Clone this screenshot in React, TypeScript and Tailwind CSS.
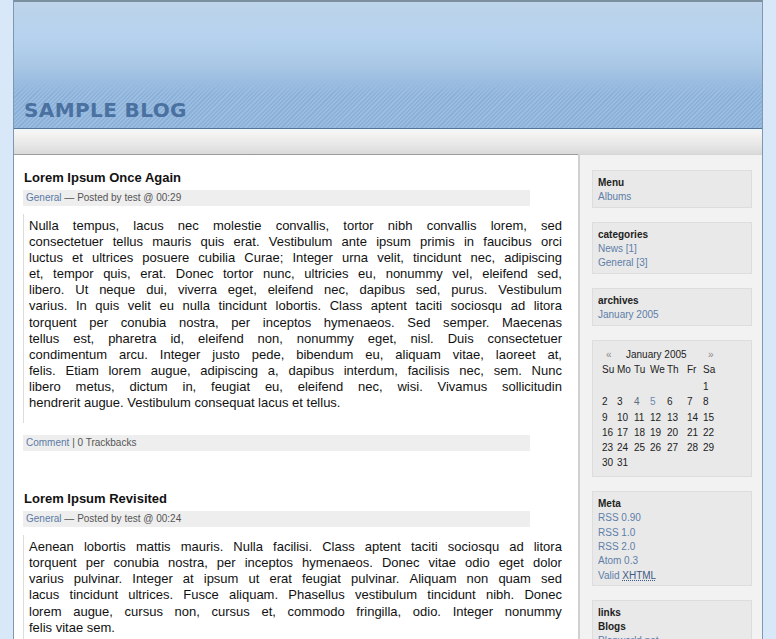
const post1 = [
  'Nulla tempus, lacus nec molestie convallis, tortor nibh convallis lorem, sed',
  'consectetuer tellus mauris quis erat. Vestibulum ante ipsum primis in faucibus orci',
  'luctus et ultrices posuere cubilia Curae; Integer urna velit, tincidunt nec, adipiscing',
  'et, tempor quis, erat. Donec tortor nunc, ultricies eu, nonummy vel, eleifend sed,',
  'libero. Ut neque dui, viverra eget, eleifend nec, dapibus sed, purus. Vestibulum',
  'varius. In quis velit eu nulla tincidunt lobortis. Class aptent taciti sociosqu ad litora',
  'torquent per conubia nostra, per inceptos hymenaeos. Sed semper. Maecenas',
  'tellus est, pharetra id, eleifend non, nonummy eget, nisl. Duis consectetuer',
  'condimentum arcu. Integer justo pede, bibendum eu, aliquam vitae, laoreet at,',
  'felis. Etiam lorem augue, adipiscing a, dapibus interdum, facilisis nec, sem. Nunc',
  'libero metus, dictum in, feugiat eu, eleifend nec, wisi. Vivamus sollicitudin',
  'hendrerit augue. Vestibulum consequat lacus et tellus.',
]

const post2 = [
  'Aenean lobortis mattis mauris. Nulla facilisi. Class aptent taciti sociosqu ad litora',
  'torquent per conubia nostra, per inceptos hymenaeos. Donec vitae odio eget dolor',
  'varius pulvinar. Integer at ipsum ut erat feugiat pulvinar. Aliquam non quam sed',
  'lacus tincidunt ultrices. Fusce aliquam. Phasellus vestibulum tincidunt nibh. Donec',
  'lorem augue, cursus non, cursus et, commodo fringilla, odio. Integer nonummy',
  'felis vitae sem.',
]

const weeks = [
  ['', '', '', '', '', '', '1'],
  ['2', '3', '4', '5', '6', '7', '8'],
  ['9', '10', '11', '12', '13', '14', '15'],
  ['16', '17', '18', '19', '20', '21', '22'],
  ['23', '24', '25', '26', '27', '28', '29'],
  ['30', '31', '', '', '', '', ''],
]

const cols = 'ml-[4px] grid grid-cols-[15px_17px_16px_17px_20px_16px_16px]'

// justified text, one row per printed line so the breaks match
function Lines({ lines }: { lines: string[] }) {
  return (
    <>
      {lines.map((line, i) =>
        i < lines.length - 1 ? (
          <div key={i} className="flex justify-between whitespace-nowrap">
            {line.split(' ').map((w, j) => (
              <span key={j}>{w}</span>
            ))}
          </div>
        ) : (
          <div key={i}>{line}</div>
        )
      )}
    </>
  )
}

function Post({ title, time, lines, footer = true }: { title: string; time: string; lines: string[]; footer?: boolean }) {
  return (
    <div>
      <h2 className="pl-[1px] text-[13px] font-bold leading-[16px] text-[#111]">{title}</h2>
      <div className="mt-[4px] h-[16px] w-[507px] bg-[#eeeeee] pl-[3px] text-[10px] leading-[16px] text-[#555]">
        <span className="text-[#5a7aa6]">General</span> — Posted by test @ {time}
      </div>
      <div className="mt-[8px] w-[539px] border-l border-[#dcdcdc] pt-[4px] pb-[12px] pl-[5px] text-[13px] leading-[16.1px] text-[#111]">
        <Lines lines={lines} />
      </div>
      {footer && (
        <div className="mt-[12px] h-[16px] w-[507px] bg-[#eeeeee] pl-[3px] text-[10px] leading-[16px] text-[#555]">
          <span className="text-[#5a7aa6]">Comment</span> | 0 Trackbacks
        </div>
      )}
    </div>
  )
}

function Box({ children, className = '' }: { children: React.ReactNode; className?: string }) {
  return (
    <div className={`mb-[14px] w-[160px] border border-[#dddddd] bg-[#e9e9e9] px-[5px] text-[10px] ${className}`}>
      {children}
    </div>
  )
}

export default function App() {
  return (
    <div className="h-screen overflow-hidden bg-[#d9e8f8] font-['Liberation_Sans',Arial,sans-serif] text-[#222]">
      <div className="ml-[13px] min-h-full w-[750px] border-x border-[#7e98b4] bg-white">
        <header className="border-t-2 border-b border-t-[#7c8f9f] border-b-[#55749a]">
          <div className="h-[78px] bg-[linear-gradient(to_bottom,#bdd4ea,#b6d2ee_45%,#abc9e6_78%,#9dbee1)]" />
          <div className="flex h-[48px] items-end bg-[linear-gradient(to_bottom,#9bbde1,rgba(155,189,225,0)_30%),repeating-linear-gradient(135deg,#8cb1d9_0px,#8cb1d9_1.5px,#9cbde2_1.5px,#9cbde2_3px)] pb-[7px] pl-[10px]">
            <h1 className="font-['DejaVu_Sans',sans-serif] text-[20px] font-bold leading-[22px] tracking-[0.4px] text-[#4a71a0]">
              SAMPLE BLOG
            </h1>
          </div>
        </header>
        <div className="h-[25px] bg-[linear-gradient(to_bottom,#eef7fc,#f6f4f2_15%,#e8e8e8_60%,#dadada)]" />

        <div className="flex">
          <main className="w-[564px] border-t border-[#9c9c9c] pt-[15px] pl-[9px]">
            <Post title="Lorem Ipsum Once Again" time="00:29" lines={post1} />
            <div className="mt-[40px]">
              <Post title="Lorem Ipsum Revisited" time="00:24" lines={post2} footer={false} />
            </div>
          </main>

          <aside className="flex-1 border-t border-l-2 border-t-[#d6d6d6] border-l-[#d0d0d0] bg-[#f2f2f2] pt-[15px] pl-[12px]">
            <Box className="pt-[5px] pb-[3px] leading-[14px]">
              <div className="font-bold text-[#222]">Menu</div>
              <div className="text-[#5e7ea8]">Albums</div>
            </Box>
            <Box className="pt-[5px] pb-[3px] leading-[14px]">
              <div className="font-bold text-[#222]">categories</div>
              <div className="text-[#5e7ea8]">News [1]</div>
              <div className="text-[#5e7ea8]">General [3]</div>
            </Box>
            <Box className="pt-[5px] pb-[3px] leading-[14px]">
              <div className="font-bold text-[#222]">archives</div>
              <div className="text-[#5e7ea8]">January 2005</div>
            </Box>
            <Box className="pt-[6px] pb-[5px]">
              <div className="flex h-[15px] leading-[15px]">
                <span className="w-[28px] pl-[8px] text-[#8a8a8a]">«</span>
                <span className="w-[82px] text-[#222]">January 2005</span>
                <span className="text-[#8a8a8a]">»</span>
              </div>
              <div className={`${cols} h-[15px] leading-[15px] text-[#222]`}>
                {['Su', 'Mo', 'Tu', 'We', 'Th', 'Fr', 'Sa'].map((d) => (
                  <span key={d}>{d}</span>
                ))}
              </div>
              <div className="mt-[2px]">
                {weeks.map((w, i) => (
                  <div key={i} className={`${cols} h-[15.3px] leading-[15.3px] text-[#222]`}>
                    {w.map((d, j) => (
                      <span
                        key={j}
                        className={d === '4' ? 'text-[#5b6b80]' : d === '5' ? 'text-[#6a8ab2]' : ''}
                      >
                        {d}
                      </span>
                    ))}
                  </div>
                ))}
              </div>
            </Box>
            <Box className="pt-[5px] pb-[2px] leading-[14.4px]">
              <div className="font-bold text-[#222]">Meta</div>
              <div className="text-[#5e7ea8]">RSS 0.90</div>
              <div className="text-[#5e7ea8]">RSS 1.0</div>
              <div className="text-[#5e7ea8]">RSS 2.0</div>
              <div className="text-[#5e7ea8]">Atom 0.3</div>
              <div className="text-[#5e7ea8]">
                Valid <span className="text-[#3d5a84] underline decoration-dotted">XHTML</span>
              </div>
            </Box>
            <Box className="pt-[5px] pb-[3px] leading-[14px]">
              <div className="font-bold text-[#222]">links</div>
              <div className="font-bold text-[#222]">Blogs</div>
              <div className="text-[#5e7ea8]">Planworld.net</div>
              <div className="text-[#5e7ea8]">Technorati</div>
            </Box>
          </aside>
        </div>
      </div>
    </div>
  )
}
